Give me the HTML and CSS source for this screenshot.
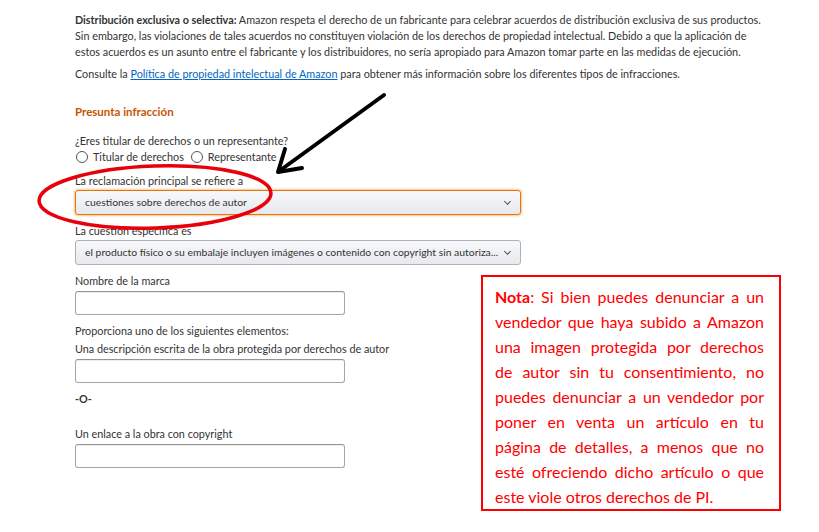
FILE: index.html
```html
<!DOCTYPE html>
<html lang="es">
<head>
  <meta charset="UTF-8">
  <title>Presunta infracción</title>
  <link rel="stylesheet" href="styles.css">
</head>
<body>

  <div class="page">
    <p class="intro"><b>Distribución exclusiva o selectiva:</b> Amazon respeta el derecho de un fabricante para celebrar acuerdos de distribución exclusiva de sus productos.<br>Sin embargo, las violaciones de tales acuerdos no constituyen violación de los derechos de propiedad intelectual. Debido a que la aplicación de<br>estos acuerdos es un asunto entre el fabricante y los distribuidores, no sería apropiado para Amazon tomar parte en las medidas de ejecución.</p>
    <p class="intro">Consulte la <a href="#">Política de propiedad intelectual de Amazon</a> para obtener más información sobre los diferentes tipos de infracciones.</p>

    <h3 class="title">Presunta infracción</h3>

    <div class="field">
      <label>¿Eres titular de derechos o un representante?</label>
      <div class="radios">
        <span class="radio"><i></i>Titular de derechos</span>
        <span class="radio"><i></i>Representante</span>
      </div>
    </div>

    <div class="field">
      <label>La reclamación principal se refiere a</label>
      <div class="select focus">cuestiones sobre derechos de autor<span class="chev"></span></div>
    </div>

    <div class="field">
      <label>La cuestión específica es</label>
      <div class="select">el producto físico o su embalaje incluyen imágenes o contenido con copyright sin autoriza...<span class="chev"></span></div>
    </div>

    <div class="field">
      <label>Nombre de la marca</label>
      <div class="input"></div>
    </div>

    <div class="field">
      <label>Proporciona uno de los siguientes elementos:</label>
      <label class="sub">Una descripción escrita de la obra protegida por derechos de autor</label>
      <div class="input"></div>
    </div>

    <p class="or">-O-</p>

    <div class="field">
      <label>Un enlace a la obra con copyright</label>
      <div class="input"></div>
    </div>
  </div>

  <svg class="marks" width="819" height="532" viewBox="0 0 819 532">
    <ellipse cx="155" cy="197" rx="116" ry="31" fill="none" stroke="#e8000b" stroke-width="3.5" transform="rotate(-2 155 197)"/>
    <line x1="384" y1="95" x2="282" y2="169" stroke="#000" stroke-width="4" stroke-linecap="round"/>
    <polyline points="285,149 278,172 302,168" fill="none" stroke="#000" stroke-width="4" stroke-linecap="round" stroke-linejoin="round"/>
  </svg>

  <div class="note">
    <span class="ln"><b>Nota</b>: Si bien puedes denunciar a un</span>
    <span class="ln">vendedor que haya subido a Amazon</span>
    <span class="ln">una imagen protegida por derechos</span>
    <span class="ln">de autor sin tu consentimiento, no</span>
    <span class="ln">puedes denunciar a un vendedor por</span>
    <span class="ln">poner en venta un artículo en tu</span>
    <span class="ln">página de detalles, a menos que no</span>
    <span class="ln">esté ofreciendo dicho artículo o que</span>
    <span class="ln last">este viole otros derechos de PI.</span>
  </div>

</body>
</html>
```

FILE: styles.css
```css
body {
  margin: 0;
  background: #fff;
  font-family: Lato, "Open Sans", Arial, sans-serif;
  color: #333;
}
.page {
  padding: 12px 0 0 75px;
  font-size: 10.8px;
  white-space: nowrap;
}
.intro {
  margin: 0 0 6px;
  line-height: 16px;
}
.intro a {
  color: #0066c0;
  text-decoration: underline;
}
.title {
  margin: 22px 0 13px;
  font-size: 11.5px;
  line-height: 16px;
  font-weight: bold;
  color: #c45500;
}
.field {
  margin-bottom: 8px;
}
.field label {
  display: block;
  line-height: 16px;
}
.field label.sub {
  margin-top: 2px;
}
.radios {
  display: flex;
  gap: 6px;
  line-height: 16px;
}
.radio {
  display: flex;
  align-items: center;
}
.radio i {
  width: 10px;
  height: 10px;
  border: 1px solid #555;
  border-radius: 50%;
  margin: 0 5px 0 1px;
}
.select {
  position: relative;
  box-sizing: border-box;
  width: 446px;
  height: 25px;
  margin-top: 1px;
  padding: 0 0 0 9px;
  font-size: 10.4px;
  line-height: 23px;
  border: 1px solid #adb1b8;
  border-radius: 3px;
  background: linear-gradient(#f7f8fa, #e7e9ec);
}
.select.focus {
  border-color: #e77600;
  box-shadow: 0 0 2px 1px rgba(228,121,17,.4);
}
.chev {
  position: absolute;
  right: 10px;
  top: 8px;
  width: 4px;
  height: 4px;
  border-right: 1.5px solid #555;
  border-bottom: 1.5px solid #555;
  transform: rotate(45deg);
}
.input {
  box-sizing: border-box;
  width: 270px;
  height: 24px;
  margin-top: 2px;
  border: 1px solid #a6a6a6;
  border-top-color: #949494;
  border-radius: 3px;
  box-shadow: 0 1px 0 rgba(0,0,0,.07) inset;
}
.or {
  margin: 6px 0 19px;
  line-height: 16px;
  font-weight: bold;
}
.marks {
  position: absolute;
  left: 0;
  top: 0;
  pointer-events: none;
}
.note {
  position: absolute;
  left: 481px;
  top: 275px;
  box-sizing: border-box;
  width: 300px;
  height: 236px;
  padding: 7px 15px 0 12px;
  border: 2px solid #f00;
  background: #fff;
  color: #f00;
  font-family: Lato, "Open Sans", sans-serif;
  font-size: 16px;
  line-height: 25px;
}
.ln {
  display: block;
  white-space: nowrap;
  text-align: justify;
  text-align-last: justify;
}
.ln.last {
  text-align-last: left;
}
```
